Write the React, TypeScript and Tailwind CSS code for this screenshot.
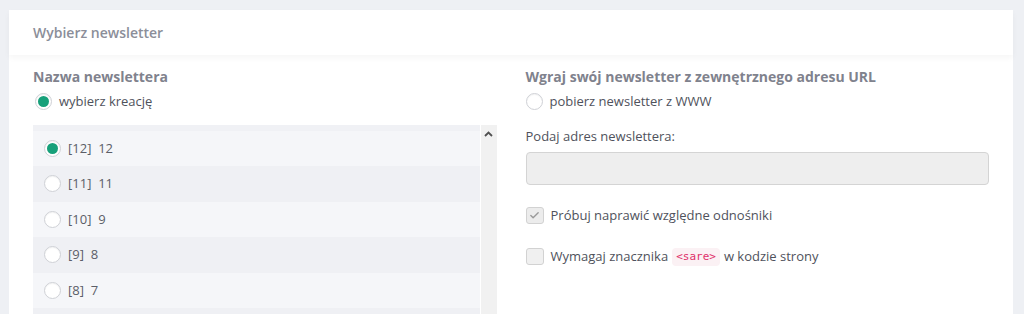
import { Check } from "lucide-react";

const rows = [
  { id: 12, name: "12", checked: true },
  { id: 11, name: "11" },
  { id: 10, name: "9" },
  { id: 9, name: "8" },
  { id: 8, name: "7" },
  { id: 7, name: "6" },
];

const Radio = ({ checked = false }: { checked?: boolean }) => (
  <span className="w-[17px] h-[17px] rounded-full border border-[#cfd1d6] bg-white flex items-center justify-center shrink-0 shadow-[inset_0_1px_1px_rgba(0,0,0,0.05)]">
    {checked && <span className="w-[11px] h-[11px] rounded-full bg-[#17a07a]" />}
  </span>
);

const App = () => {
  return (
    <div
      className="w-[1024px] h-[314px] overflow-hidden bg-[#eef0f4] pt-[10px] pl-[9px] pr-[11px]"
      style={{ fontFamily: '"Open Sans", "Liberation Sans", sans-serif' }}
    >
      <div className="bg-white h-[400px]">
        {/* Header */}
        <div className="h-[45px] flex items-center px-6 shadow-[0_3px_6px_rgba(0,0,0,0.04)] relative">
          <h2 className="text-[14px] font-semibold text-[#8b8e99]">
            Wybierz newsletter
          </h2>
        </div>

        <div className="grid grid-cols-2 gap-[29px] px-6 pt-[11px]">
          {/* Left column */}
          <div>
            <h3 className="text-[14px] font-bold text-[#7f828d] leading-[22px]">
              Nazwa newslettera
            </h3>
            <label className="flex items-center gap-[7px] mt-[4px] ml-[2px] text-[13px] text-[#4f525c]">
              <Radio checked />
              wybierz kreację
            </label>

            <div className="mt-[13px] bg-[#f0f1f5] flex">
              <div className="flex-1 pt-[6px]">
                {rows.map((r, i) => (
                  <div
                    key={r.id}
                    className={`h-[35.5px] flex items-center pl-[11px] gap-[7px] text-[13px] text-[#5b5e68] ${i % 2 === 0 ? "bg-[#f5f6f9]" : "bg-[#eff0f4]"}`}
                  >
                    <Radio checked={r.checked} />
                    <span>
                      [{r.id}]&nbsp; {r.name}
                    </span>
                  </div>
                ))}
              </div>
              <div className="w-[17px] bg-[#f1f1f1] border-l border-white flex justify-center pt-[6px]">
                <svg width="9" height="6" viewBox="0 0 9 6">
                  <path d="M1 5 L4.5 1.5 L8 5" stroke="#505050" strokeWidth="1.8" fill="none" />
                </svg>
              </div>
            </div>
          </div>

          {/* Right column */}
          <div>
            <h3 className="text-[14px] font-bold text-[#7f828d] leading-[22px]">
              Wgraj swój newsletter z zewnętrznego adresu URL
            </h3>
            <label className="flex items-center gap-[7px] mt-[4px] text-[13px] text-[#4f525c]">
              <Radio />
              pobierz newsletter z WWW
            </label>

            <p className="mt-[15px] text-[13px] text-[#4f525c] leading-[18px]">
              Podaj adres newslettera:
            </p>
            <div className="mt-[7px] h-[33px] rounded-[4px] bg-[#eeeeee] border border-[#d4d4d4]" />

            <label className="flex items-center gap-[7px] mt-[21px] text-[13px] text-[#4f525c]">
              <span className="w-[18px] h-[17px] rounded-[3px] border border-[#d2d2d2] bg-[#ececec] flex items-center justify-center">
                <Check size={11} strokeWidth={3} className="text-[#9a9a9a]" />
              </span>
              Próbuj naprawić względne odnośniki
            </label>
            <label className="flex items-center gap-[7px] mt-[22px] text-[13px] text-[#4f525c]">
              <span className="w-[18px] h-[17px] rounded-[3px] border border-[#d2d2d2] bg-[#f0f0f0]" />
              <span className="flex items-center">
                Wymagaj znacznika
                <code
                  className="inline-block mx-[4px] text-[11px] leading-[18px] text-[#e0306a] bg-[#fbf1f4] rounded-[4px] px-[4px]"
                  style={{ fontFamily: '"DejaVu Sans Mono", "Liberation Mono", monospace' }}
                >
                  &lt;sare&gt;
                </code>
                w kodzie strony
              </span>
            </label>
          </div>
        </div>
      </div>
    </div>
  );
};

export default App;
